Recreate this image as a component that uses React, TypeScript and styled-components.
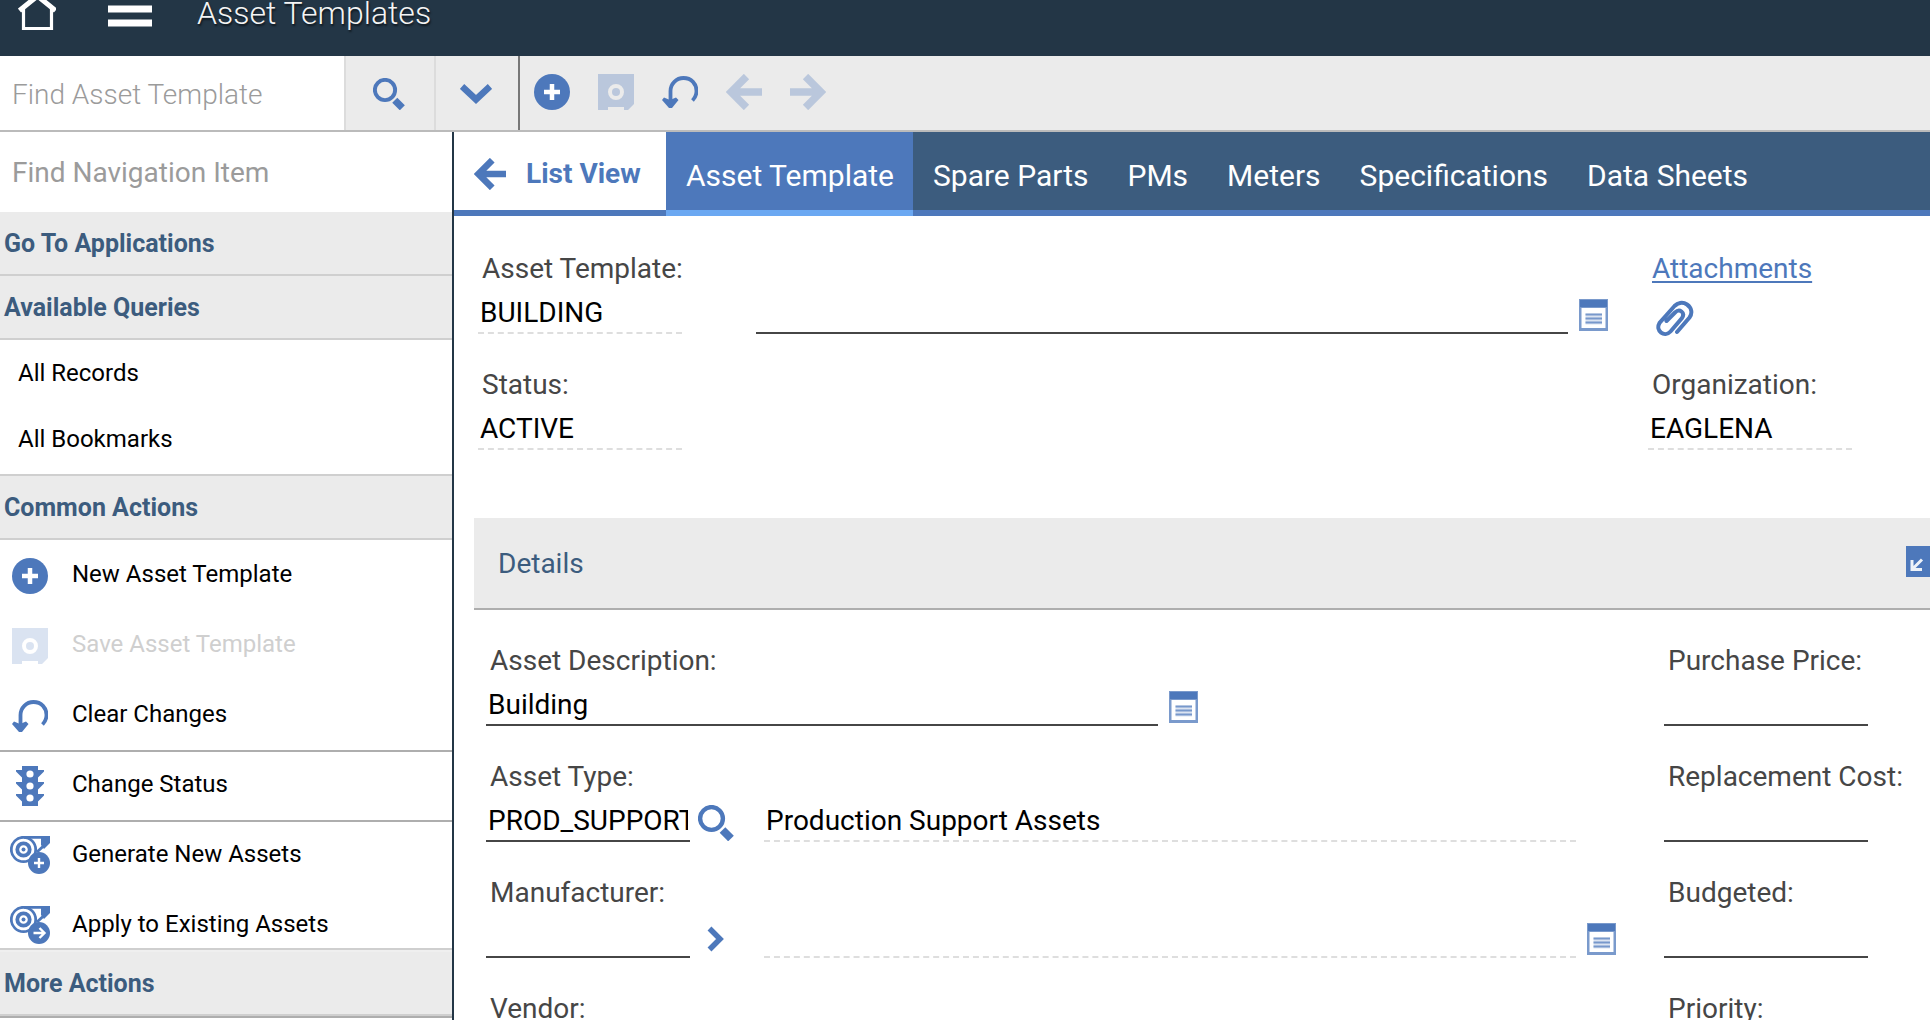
import React from "react";
import styled, { createGlobalStyle } from "styled-components";

const color = {
  navy: "#233646",
  slate: "#3c5c7e",
  blue: "#4d78bb",
  sky: "#6ba8f2",
  grey: "#ebebeb",
  rule: "#cfcfcf",
  ruleDark: "#aeaeae",
  ink: "#464646",
  muted: "#9b9b9b",
};

const GlobalStyle = createGlobalStyle`
  * { box-sizing: border-box; }
  body {
    margin: 0;
    overflow: hidden;
    background: #fff;
    color: #000;
    font: 400 28px/36px Roboto, "Liberation Sans", sans-serif;
  }
  button, input { font: inherit; color: inherit; border-radius: 0; }
  button { margin: 0; padding: 0; border: 0; background: none; cursor: pointer; text-align: left; }
  button:disabled { cursor: default; }
  svg { display: block; flex: none; }
`;

const Page = styled.div`
  display: flex;
  flex-direction: column;
  height: 100vh;
  overflow: hidden;
`;

const Header = styled.header`
  display: flex;
  align-items: flex-start;
  flex: none;
  height: 56px;
  padding-left: 18px;
  background: ${color.navy};
`;

const HeaderButton = styled.button<{ $gap: number }>`
  margin-right: ${(p) => p.$gap}px;
`;

const Title = styled.h1`
  margin: 0;
  color: #f4f4f4;
  font-size: 32px;
  font-weight: 300;
  line-height: 26px;
  text-shadow: 1px 2px 2px rgba(0, 0, 0, 0.6);
`;

const Toolbar = styled.div`
  display: flex;
  flex: none;
  height: 76px;
  border-bottom: 2px solid #bbb;
  background: ${color.grey};
`;

const SearchInput = styled.input`
  width: 344px;
  padding: 4px 12px 0;
  border: 0;
  outline: 0;
  background: #fff;
  font-weight: 300;
  &::placeholder { color: ${color.muted}; opacity: 1; }
`;

const ToolbarCell = styled.button<{ $width: number }>`
  display: grid;
  place-items: center;
  width: ${(p) => p.$width}px;
  padding: 2px 2px 0 0;
  border-left: 2px solid #dcdcdc;
`;

const ToolbarActions = styled.div`
  display: flex;
  align-items: center;
  gap: 28px;
  padding: 0 14px 2px;
  border-left: 2px solid #777;
`;

const IconButton = styled.button`
  flex: none;
  &:disabled { opacity: 0.3; }
`;

const Body = styled.div`
  display: flex;
  flex: 1;
  min-height: 0;
`;

const Sidebar = styled.nav`
  flex: none;
  width: 454px;
  overflow: hidden;
  border-right: 2px solid ${color.navy};
  font-size: 24px;
  line-height: 32px;
`;

const NavInput = styled.input`
  display: block;
  width: 100%;
  height: 80px;
  padding: 0 12px;
  border: 0;
  outline: 0;
  font-size: 28px;
  &::placeholder { color: ${color.muted}; opacity: 1; }
`;

const SectionButton = styled.button<{ $top?: string }>`
  display: block;
  width: 100%;
  padding: 16px 4px 14px;
  border-top: ${(p) => (p.$top ? `2px solid ${p.$top}` : "0")};
  border-bottom: 2px solid ${color.rule};
  background: ${color.grey};
  color: ${color.slate};
  font-size: 25px;
  font-weight: 700;
`;

const List = styled.ul`
  margin: 0;
  padding: 0 0 2px;
  list-style: none;
`;

const QueryButton = styled.button`
  display: block;
  width: 100%;
  height: 66px;
  padding-left: 18px;
`;

const ActionList = styled(List)`
  padding: 2px 0 0;
  border-bottom: 2px solid ${color.rule};
`;

const ActionButton = styled.button<{ $ruled?: boolean; $last?: boolean }>`
  display: flex;
  align-items: center;
  gap: 22px;
  width: 100%;
  height: ${(p) => (p.$last ? 56 : 70)}px;
  padding: 14px 10px ${(p) => (p.$last ? 2 : p.$ruled ? 14 : 16)}px;
  border-bottom: ${(p) => (p.$ruled ? `2px solid ${color.ruleDark}` : "0")};
  &:disabled { color: #cfcfcf; }
  &:disabled svg { opacity: 0.2; }
`;

const ActionText = styled.span`
  padding-bottom: 4px;
`;

const NextPanel = styled.div`
  height: 40px;
  border-top: 2px solid ${color.ruleDark};
`;

const Main = styled.main`
  flex: 1;
  min-width: 0;
  overflow: hidden;
`;

const Tabs = styled.div`
  display: flex;
  height: 84px;
  background: ${color.slate};
  box-shadow: inset 0 -6px 0 ${color.blue};
`;

const ListViewTab = styled.button`
  display: flex;
  align-items: center;
  gap: 20px;
  width: 212px;
  padding: 6px 0 0 20px;
  border-bottom: 6px solid ${color.blue};
  background: #fff;
  color: ${color.blue};
  font-weight: 700;
`;

const Tab = styled.button<{ $active?: boolean }>`
  padding: 10px 19px 0 20px;
  border-bottom: 6px solid ${(p) => (p.$active ? color.sky : color.blue)};
  background: ${(p) => (p.$active ? color.blue : "transparent")};
  color: #fff;
  font-size: 30px;
`;

const Form = styled.div<{ $top: number; $inset: number; $right: number }>`
  display: grid;
  grid-template-columns: minmax(0, 1fr) ${(p) => p.$right}px;
  row-gap: 26px;
  padding: ${(p) => p.$top}px 0 0 ${(p) => p.$inset}px;
`;

const Field = styled.div`
  min-width: 0;
`;

const Label = styled.label`
  display: block;
  height: 44px;
  padding: 7px 4px 0;
  color: ${color.ink};
  white-space: nowrap;
`;

const AttachLink = styled.a`
  display: block;
  height: 44px;
  padding: 7px 4px 0;
  color: ${color.blue};
  text-decoration: underline;
  text-decoration-thickness: 2px;
  text-underline-offset: 3px;
`;

const Controls = styled.div`
  display: flex;
  align-items: center;
  height: 46px;
`;

const TextBox = styled.input<{ $grow?: boolean; $width?: number }>`
  flex: ${(p) => (p.$grow ? "1 1 0" : `0 1 ${p.$width ?? 204}px`)};
  width: ${(p) => p.$width ?? 204}px;
  min-width: 0;
  height: 46px;
  padding: 4px 2px 0 2px;
  border: 0;
  border-bottom: 2px solid ${color.ink};
  outline: 0;
  background: transparent;
  &:read-only { border-bottom: 2px dashed #dedede; }
`;

const Slot = styled.div<{ $width: number }>`
  display: flex;
  flex: none;
  align-items: center;
  width: ${(p) => p.$width}px;
  padding-top: 8px;
  padding-left: ${(p) => (p.$width > 76 ? 11 : 8)}px;
`;

const DetailsHeader = styled.div`
  display: flex;
  align-items: center;
  justify-content: space-between;
  height: 92px;
  margin: 68px 0 0 20px;
  padding-left: 24px;
  overflow: hidden;
  border-bottom: 2px solid ${color.ruleDark};
  background: ${color.grey};
`;

const DetailsTitle = styled.h2`
  margin: 0;
  padding-top: 2px;
  color: ${color.slate};
  font-size: 28px;
  font-weight: 400;
`;

const CollapseButton = styled.button`
  flex: none;
  width: 24px;
  padding-bottom: 4px;
  overflow: hidden;
`;

const HomeIcon = () => (
  <svg width="38" height="31" viewBox="0 0 38 31" fill="none" stroke="#fff">
    <path d="M5.500 9v19.500h28V9" strokeWidth="3.200" />
    <path d="M1.500 10.500L19.500-4l18 14.500" strokeWidth="5" />
  </svg>
);

const MenuIcon = () => (
  <svg width="44" height="28" viewBox="0 0 44 28" fill="#fff">
    <path d="M0 5.500h44v7H0zM0 19.500h44v7H0z" />
  </svg>
);

const SearchIcon = ({ size = 36 }: { size?: number }) => (
  <svg width={size} height={size} viewBox="0 0 36 36" fill="none" stroke={color.blue}>
    <circle cx="13.500" cy="13.500" r="11.400" strokeWidth="4.400" />
    <path d="M24.500 25l8.500 8.500" strokeWidth="8" />
  </svg>
);

const DownIcon = () => (
  <svg width="32" height="22" viewBox="0 0 32 22" fill="none" stroke={color.blue} strokeWidth="6.500">
    <path d="M2 3.500l14 13 14-13" />
  </svg>
);

const RightIcon = () => (
  <svg width="36" height="26" viewBox="0 0 36 26" fill="none" stroke={color.blue} strokeWidth="5.500">
    <path d="M11.500 2.500L22 13 11.500 23.500" />
  </svg>
);

const PlusIcon = () => (
  <svg width="36" height="36" viewBox="0 0 36 36">
    <circle cx="18" cy="18" r="18" fill={color.blue} />
    <path d="M18 10v16M10 18h16" stroke="#fff" strokeWidth="4.500" />
  </svg>
);

const SafeIcon = () => (
  <svg width="36" height="36" viewBox="0 0 36 36">
    <path
      fill={color.blue}
      fillRule="evenodd"
      d="M0 0h36v30l-6 6h-4v-3H10v3H0zM18 10a8 8 0 1 0 0 16 8 8 0 1 0 0-16z"
    />
    <circle cx="18" cy="18" r="4" fill={color.blue} />
  </svg>
);

const UndoIcon = () => (
  <svg width="36" height="36" viewBox="0 0 36 36">
    <path d="M8.500 29V17A13 13 0 0 1 21.500 4c8 0 13 6 13 13 0 4-1.500 7-4 9.500" fill="none" stroke={color.blue} strokeWidth="3.800" />
    <path d="M0 26l2-2.500 6 2.500 6-2.500 2.500 2.500-6.500 8h-3z" fill={color.blue} />
  </svg>
);

const ArrowIcon = ({ flip, size = 36 }: { flip?: boolean; size?: number }) => (
  <svg width={size} height={size} viewBox="0 0 36 36" fill="none" stroke={color.blue} strokeWidth="7.500">
    <g transform={flip ? "matrix(-1 0 0 1 36 0)" : undefined}>
      <path d="M20.500 2.500L5 18l15.500 15.500M6 18h30" />
    </g>
  </svg>
);

const TrafficIcon = () => (
  <svg width="40" height="40" viewBox="0 0 40 40">
    <path
      fill={color.blue}
      d="M12 0h16v4h6v1.500l-6 6V16h6v1.500l-6 6V28h6v1.500l-6 6V40H12v-4.500l-6-6V28h6v-4.500l-6-6V16h6v-4.500l-6-6V4h6z"
    />
    <g fill="#fff">
      <circle cx="20" cy="8" r="3.600" />
      <circle cx="20" cy="20" r="3.600" />
      <circle cx="20" cy="32" r="3.600" />
    </g>
  </svg>
);

const AssetIcon = ({ arrow }: { arrow?: boolean }) => (
  <svg width="40" height="40" viewBox="0 0 40 40" fill="none" stroke={color.blue}>
    <circle cx="13.500" cy="13.500" r="12.200" strokeWidth="2.800" />
    <circle cx="13.500" cy="13.500" r="6.200" strokeWidth="3.800" />
    <circle cx="13.500" cy="13.500" r="2" fill={color.blue} stroke="none" />
    <path d="M14 1.300h24.600v4L27 16" strokeWidth="2.800" />
    <path d="M31 1h9v6l-6 6-3-4z" fill={color.blue} stroke="none" />
    <circle cx="29" cy="27" r="11" fill={color.blue} stroke="none" />
    {arrow ? (
      <path d="M23.500 27h10M29.500 22l5 5-5 5" stroke="#fff" strokeWidth="2.400" />
    ) : (
      <path d="M29 22v10M24 27h10" stroke="#fff" strokeWidth="2.400" />
    )}
  </svg>
);

const NoteIcon = () => (
  <svg width="29" height="32" viewBox="0 0 29 32">
    <path d="M0 0h29v32H0z" fill={color.blue} fillOpacity="0.750" />
    <path d="M1 1h27v7H1z" fill={color.blue} />
    <path d="M2.500 9h24v20h-24z" fill="#fff" />
    <path d="M6.500 14.500h16.500v11H6.500z" fill={color.blue} fillOpacity="0.200" />
    <path d="M6.500 15.500h16.500M6.500 19.500h16.500M6.500 23.500h16.500" stroke={color.blue} strokeWidth="2.200" strokeOpacity="0.700" />
  </svg>
);

const ClipIcon = () => (
  <svg width="38" height="46" viewBox="0 -8 38 46" fill="none" stroke={color.blue} strokeWidth="4" strokeLinecap="round">
    <path d="M10.500 21L19 12.500c4.500-4.500 10.500 0 7 5.500L14.500 31.500C8.500 38-1 31 3.500 23L18.500 6c3-3 8-4.500 12.500-1.500 5 3.500 5.500 9 2.500 13L21 32" />
  </svg>
);

const CollapseIcon = () => (
  <svg width="32" height="31" viewBox="0 0 32 31">
    <path d="M0 0h32v31H0z" fill={color.blue} />
    <path d="M6 14v9.500h10M7 22.500l9-9" fill="none" stroke="#fff" strokeWidth="3" strokeOpacity="0.900" />
  </svg>
);

const tabs = ["Asset Template", "Spare Parts", "PMs", "Meters", "Specifications", "Data Sheets"];

const actions = [
  { text: "New Asset Template", icon: <PlusIcon /> },
  { text: "Save Asset Template", icon: <SafeIcon />, disabled: true },
  { text: "Clear Changes", icon: <UndoIcon />, ruled: true },
  { text: "Change Status", icon: <TrafficIcon />, ruled: true },
  { text: "Generate New Assets", icon: <AssetIcon /> },
  { text: "Apply to Existing Assets", icon: <AssetIcon arrow /> },
];

const IconBox = styled.span`
  display: grid;
  place-items: center;
  flex: none;
  width: 40px;
  height: 40px;
`;

interface FieldProps {
  id: string;
  label: string;
  value?: string;
  readOnly?: boolean;
  width?: number;
  children?: React.ReactNode;
}

const LabeledField = ({ id, label, value = "", readOnly, width, children }: FieldProps) => (
  <Field>
    <Label htmlFor={id}>{label}</Label>
    <Controls>
      <TextBox id={id} defaultValue={value} readOnly={readOnly} $width={width} />
      {children}
    </Controls>
  </Field>
);

export default function App() {
  return (
    <Page>
      <GlobalStyle />
      <Header>
        <HeaderButton $gap={52} aria-label="Home"><HomeIcon /></HeaderButton>
        <HeaderButton $gap={45} aria-label="Menu"><MenuIcon /></HeaderButton>
        <Title>Asset Templates</Title>
      </Header>
      <Toolbar>
        <SearchInput aria-label="Find Asset Template" placeholder="Find Asset Template" />
        <ToolbarCell $width={90} aria-label="Search"><SearchIcon size={32} /></ToolbarCell>
        <ToolbarCell $width={84} aria-label="Search options"><DownIcon /></ToolbarCell>
        <ToolbarActions>
          <IconButton aria-label="New"><PlusIcon /></IconButton>
          <IconButton aria-label="Save" disabled><SafeIcon /></IconButton>
          <IconButton aria-label="Clear changes"><UndoIcon /></IconButton>
          <IconButton aria-label="Previous" disabled><ArrowIcon /></IconButton>
          <IconButton aria-label="Next" disabled><ArrowIcon flip /></IconButton>
        </ToolbarActions>
      </Toolbar>
      <Body>
        <Sidebar>
          <NavInput aria-label="Find Navigation Item" placeholder="Find Navigation Item" />
          <SectionButton>Go To Applications</SectionButton>
          <SectionButton>Available Queries</SectionButton>
          <List>
            <li><QueryButton>All Records</QueryButton></li>
            <li><QueryButton>All Bookmarks</QueryButton></li>
          </List>
          <SectionButton $top={color.rule}>Common Actions</SectionButton>
          <ActionList>
            {actions.map((a, i) => (
              <li key={a.text}>
                <ActionButton $ruled={a.ruled} $last={i === actions.length - 1} disabled={a.disabled}>
                  <IconBox>{a.icon}</IconBox>
                  <ActionText>{a.text}</ActionText>
                </ActionButton>
              </li>
            ))}
          </ActionList>
          <SectionButton $top="#efefef">More Actions</SectionButton>
          <NextPanel />
        </Sidebar>
        <Main>
          <Tabs role="tablist">
            <ListViewTab><ArrowIcon size={32} />List View</ListViewTab>
            {tabs.map((t, i) => (
              <Tab key={t} role="tab" aria-selected={i === 0} $active={i === 0}>{t}</Tab>
            ))}
          </Tabs>
          <Form $top={28} $inset={24} $right={282}>
            <Field>
              <Label htmlFor="template">Asset Template:</Label>
              <Controls>
                <TextBox id="template" defaultValue="BUILDING" readOnly />
                <Slot $width={74} />
                <TextBox aria-label="Template description" $grow />
                <Slot $width={80}><IconButton aria-label="Long description"><NoteIcon /></IconButton></Slot>
              </Controls>
            </Field>
            <Field>
              <AttachLink href="#attachments">Attachments</AttachLink>
              <Controls>
                <Slot $width={74}><IconButton aria-label="View attachments"><ClipIcon /></IconButton></Slot>
              </Controls>
            </Field>
            <LabeledField id="status" label="Status:" value="ACTIVE" readOnly />
            <LabeledField id="org" label="Organization:" value="EAGLENA" readOnly />
          </Form>
          <DetailsHeader>
            <DetailsTitle>Details</DetailsTitle>
            <CollapseButton aria-label="Collapse details"><CollapseIcon /></CollapseButton>
          </DetailsHeader>
          <Form $top={26} $inset={32} $right={266}>
            <LabeledField id="description" label="Asset Description:" value="Building" width={672}>
              <Slot $width={80}><IconButton aria-label="Long description"><NoteIcon /></IconButton></Slot>
            </LabeledField>
            <LabeledField id="price" label="Purchase Price:" />
            <Field>
              <Label htmlFor="type">Asset Type:</Label>
              <Controls>
                <TextBox id="type" defaultValue="PROD_SUPPORT" />
                <Slot $width={74}><IconButton aria-label="Select asset type"><SearchIcon /></IconButton></Slot>
                <TextBox aria-label="Asset type description" defaultValue="Production Support Assets" readOnly $grow />
                <Slot $width={88} />
              </Controls>
            </Field>
            <LabeledField id="replacement" label="Replacement Cost:" />
            <Field>
              <Label htmlFor="manufacturer">Manufacturer:</Label>
              <Controls>
                <TextBox id="manufacturer" />
                <Slot $width={74}><IconButton aria-label="Manufacturer menu"><RightIcon /></IconButton></Slot>
                <TextBox aria-label="Manufacturer description" readOnly $grow />
                <Slot $width={88}><IconButton aria-label="Long description"><NoteIcon /></IconButton></Slot>
              </Controls>
            </Field>
            <LabeledField id="budgeted" label="Budgeted:" />
            <LabeledField id="vendor" label="Vendor:" />
            <LabeledField id="priority" label="Priority:" />
          </Form>
        </Main>
      </Body>
    </Page>
  );
}
